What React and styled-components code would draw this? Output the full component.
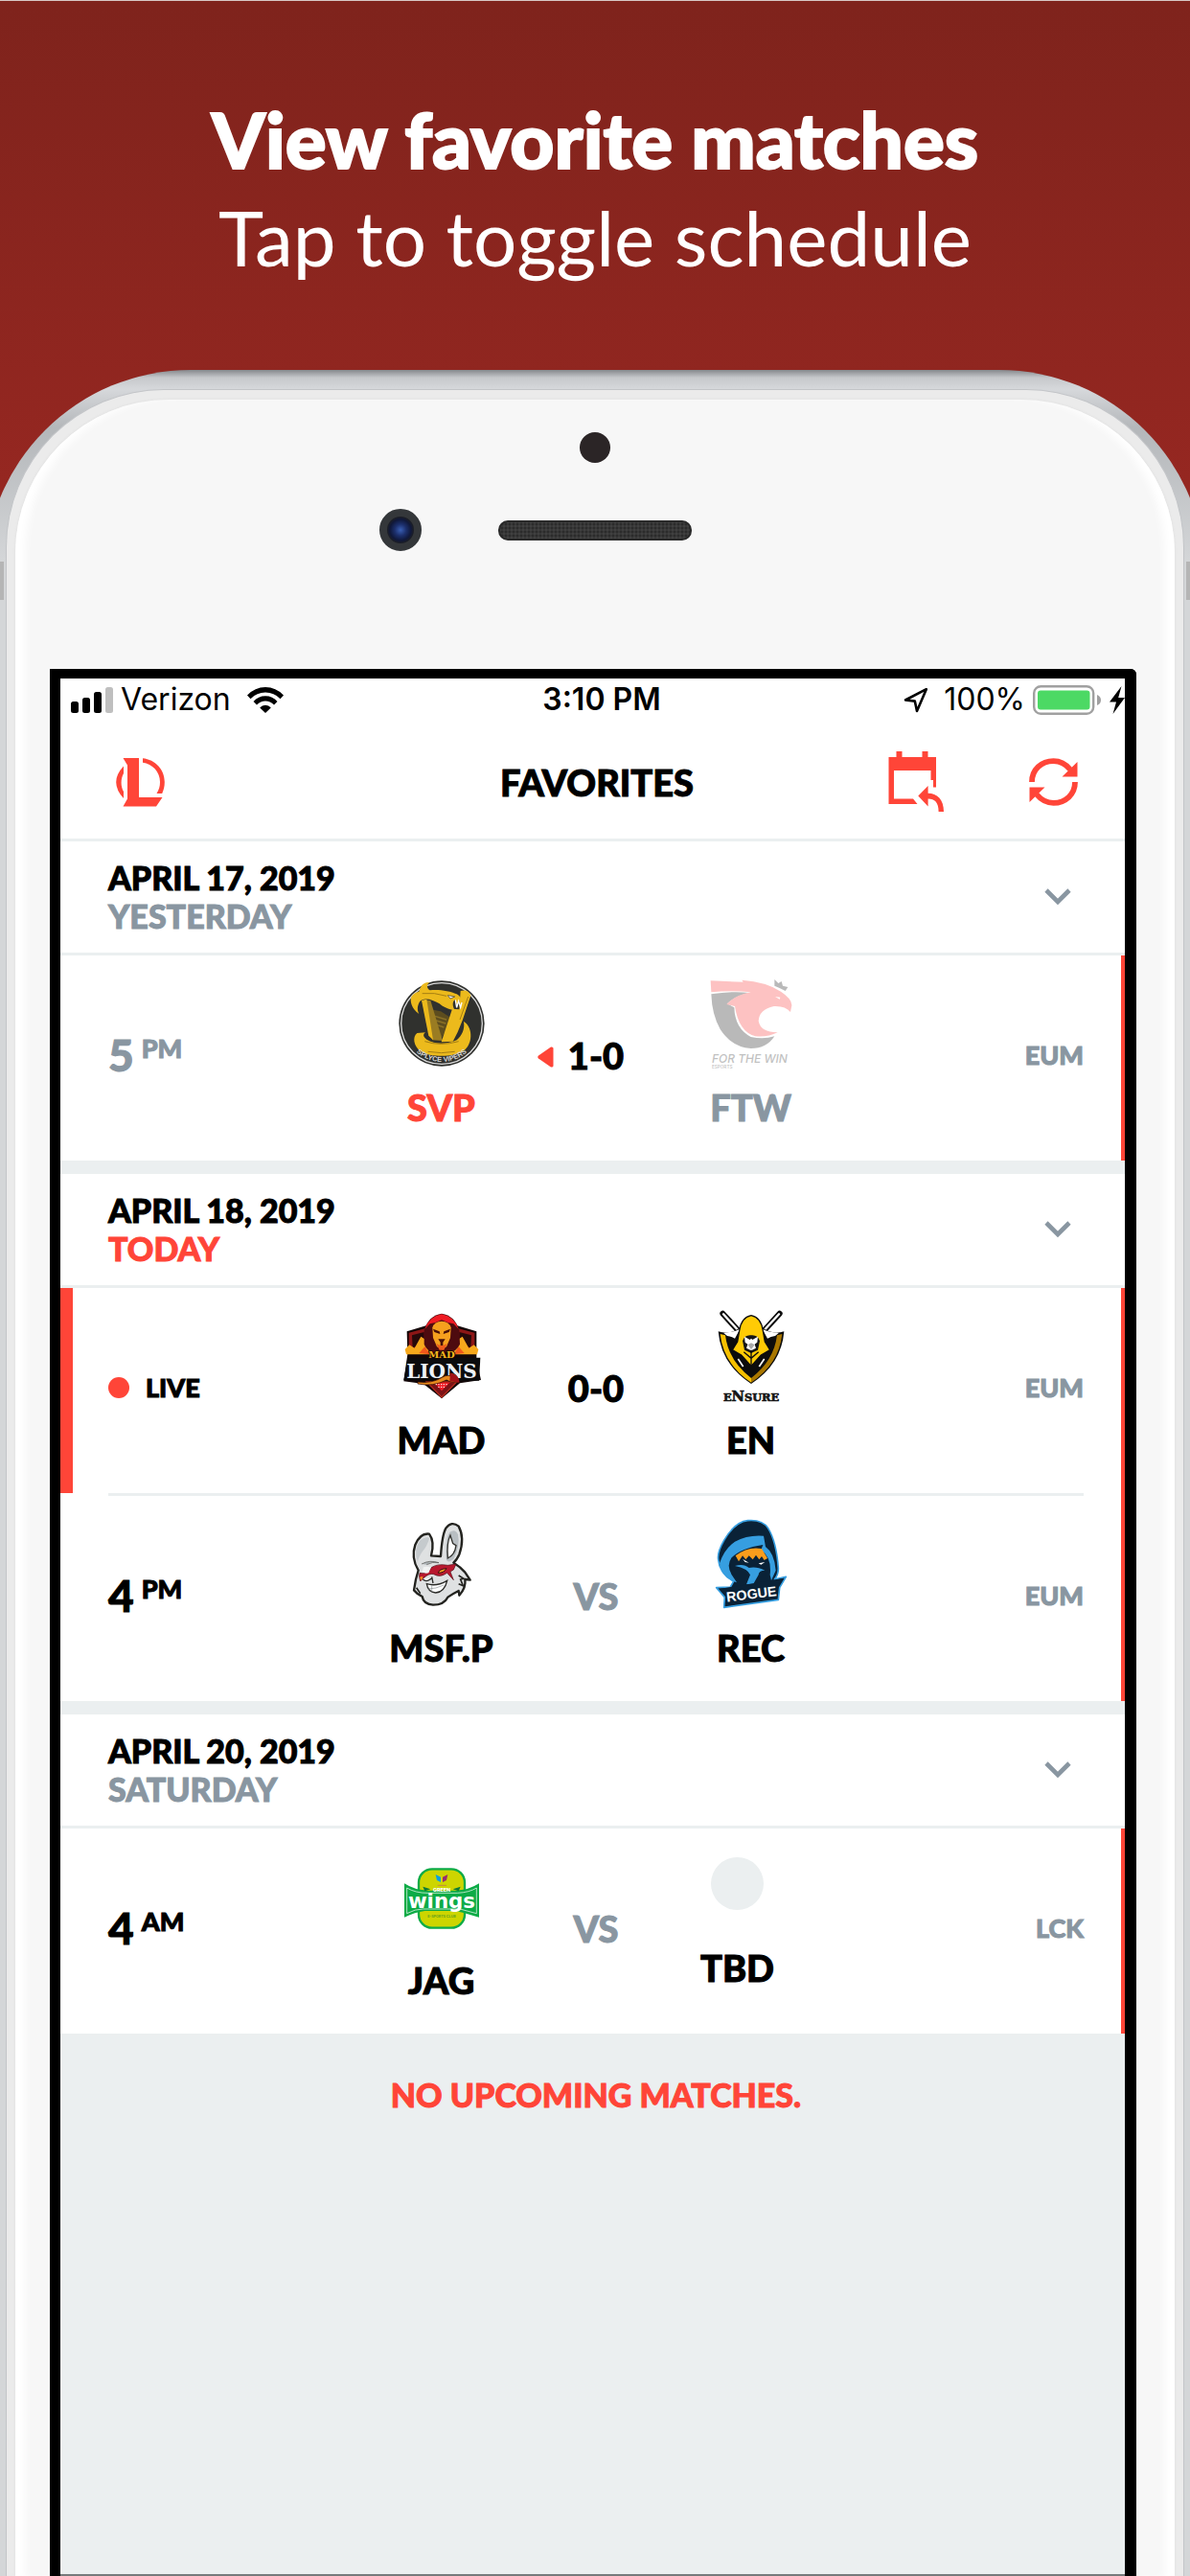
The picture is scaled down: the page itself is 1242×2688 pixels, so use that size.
import React from "react";
import styled, { createGlobalStyle, css } from "styled-components";

const c = {
  red: "#ff4538",
  grey: "#8996a1",
  mist: "#ebeff0",
  black: "#000",
};

const display = `Lato, "Open Sans", sans-serif`;
const system = `Inter, Roboto, sans-serif`;

const heavy = css`
  font-weight: 900;
  -webkit-text-stroke: 1px currentColor;
`;

const GlobalStyle = createGlobalStyle`
  *, *::before, *::after { box-sizing: border-box; }
  html, body { margin: 0; padding: 0; }
  body { font-family: ${display}; color: ${c.black}; background: #962721; }
`;

/* ---------- promo frame ---------- */

const Page = styled.main`
  min-height: 100vh;
  display: flex;
  flex-direction: column;
  overflow: hidden;
  border-top: 1px solid #d9c8c6;
  background: linear-gradient(180deg, #7f231c 0, #962721 520px);
`;

const Promo = styled.header`
  padding: 93px 24px 87px;
  color: #fff;
  text-align: center;
`;

const PromoTitle = styled.h1`
  margin: 0;
  font-size: 80px;
  line-height: 102px;
  font-weight: 900;
  -webkit-text-stroke: 2px currentColor;
`;

const PromoText = styled.p`
  margin: 0;
  font-size: 80px;
  line-height: 103px;
  font-weight: 400;
`;

const Phone = styled.div`
  position: relative;
  flex: 1;
  display: flex;
  margin: 0 -16px;
  padding: 20px 22px 0;
  border-radius: 215px 215px 0 0;
  background: linear-gradient(180deg, #85888c 0, #c6c8cb 8px, #d6d8db 20px, #b4b7ba 60px, #d4d6d8 200px, #d4d6d8 100%);
`;

const SideKey = styled.span`
  position: absolute;
  top: 200px;
  ${(p) => p.$side}: 16px;
  width: 4px;
  height: 40px;
  background: #b5b5b5;
`;

const Bezel = styled.div`
  flex: 1;
  display: flex;
  padding: 10px 9px 0;
  border: 1px solid #c3c5c8;
  border-bottom: 0;
  border-radius: 165px 165px 0 0;
  background: #ebebeb;
`;

const Face = styled.div`
  flex: 1;
  display: flex;
  flex-direction: column;
  padding: 34px 40px 0 36px;
  border-radius: 160px 160px 0 0;
  background: #f7f7f7;
  box-shadow: 0 0 3px #dcdcdc, inset 14px 0 8px -4px #fff, inset -14px 0 8px -4px #fff;
`;

const Sensor = styled.span`
  align-self: center;
  width: 32px;
  height: 32px;
  margin-left: 4px;
  border-radius: 50%;
  background: #2b2526;
`;

const Hardware = styled.div`
  display: grid;
  grid-template-columns: 1fr auto 1fr;
  align-items: center;
  margin: 48px 0 123px 4px;
`;

const Lens = styled.span`
  justify-self: end;
  width: 44px;
  height: 44px;
  margin-right: 80px;
  border: 8px solid #34373a;
  border-radius: 50%;
  background: radial-gradient(circle at 50% 50%, #3a5fb4 0, #1c2f6c 6px, #10183a 11px, #1d1f24 14px);
`;

const Speaker = styled.span`
  width: 202px;
  height: 21px;
  border: 2px solid #2a2a2a;
  border-radius: 10px;
  background: radial-gradient(circle, #2b2b2b 1px, #404040 2px) 0 0 / 4px 4px;
`;

const Screen = styled.section`
  flex: 1;
  display: flex;
  flex-direction: column;
  border: solid #000;
  border-width: 10px 12px 0 11px;
  border-radius: 0 6px 0 0;
  background: ${c.mist};
`;

/* ---------- app chrome ---------- */

const StatusBar = styled.div`
  display: grid;
  grid-template-columns: 1fr auto 1fr;
  align-items: center;
  height: 42px;
  padding: 2px 0 0 11px;
  background: #fff;
  font-family: ${system};
  font-size: 32px;
  line-height: 40px;
`;

const StatusGroup = styled.div`
  display: flex;
  align-items: center;
  justify-content: ${(p) => (p.$end ? "flex-end" : "flex-start")};
  gap: ${(p) => p.$gap}px;
`;

const Clock = styled.time`
  font-weight: 600;
  padding-left: 8px;
`;

const NavBar = styled.div`
  display: grid;
  grid-template-columns: 1fr auto 1fr;
  align-items: center;
  height: 128px;
  padding: 6px 49px 0 58px;
  border-bottom: 3px solid ${c.mist};
  background: #fff;
`;

const NavTitle = styled.h2`
  margin: 0;
  font-size: 38px;
  line-height: 44px;
  ${heavy}
`;

const NavActions = styled.div`
  display: flex;
  justify-content: flex-end;
  align-items: center;
  gap: 88px;
`;

const IconButton = styled.button`
  display: flex;
  justify-self: start;
  padding: 0;
  border: 0;
  background: none;
  color: ${(p) => p.$tone || c.red};
  cursor: pointer;
`;

/* ---------- schedule ---------- */

const Days = styled.div`
  display: flex;
  flex-direction: column;
  gap: 14px;
`;

const Day = styled.section`
  background: #fff;
`;

const DayHeader = styled.header`
  display: flex;
  align-items: center;
  justify-content: space-between;
  padding: 18px 56px 18px 50px;
  border-bottom: 3px solid ${c.mist};
  font-size: 34px;
  line-height: 40px;
  ${heavy}
`;

const DayDate = styled.h3`
  margin: 0;
  font: inherit;
`;

const DayLabel = styled.p`
  margin: 0;
  color: ${(p) => (p.$today ? c.red : c.grey)};
  -webkit-text-stroke-color: ${(p) => (p.$today ? c.red : c.grey)};
`;

const MatchList = styled.ul`
  margin: 0;
  padding: 0;
  list-style: none;
  border-right: 4px solid ${c.red};
`;

const MatchItem = styled.li`
  padding: 0 39px 0 ${(p) => (p.$live ? 37 : 50)}px;
  border-left: ${(p) => (p.$live ? `13px solid ${c.red}` : "0")};
`;

const MatchGrid = styled.div`
  display: grid;
  grid-template-columns: 1fr 160px 163px 160px 1fr;
  border-top: ${(p) => (p.$divided ? `3px solid ${c.mist}` : "0")};
`;

const Cell = styled.div`
  display: flex;
  align-items: center;
  justify-content: ${(p) => p.$align || "flex-start"};
  min-height: 214px;
  padding-bottom: 6px;
`;

const Time = styled.time`
  display: flex;
  align-items: flex-start;
  gap: 8px;
  color: ${(p) => (p.$past ? c.grey : c.black)};
  font-size: 46px;
  line-height: 46px;
  ${heavy}
`;

const Meridiem = styled.span`
  font-size: 27px;
  line-height: 32px;
`;

const Live = styled.span`
  display: flex;
  align-items: center;
  gap: 17px;
  font-size: 27px;
  line-height: 32px;
  ${heavy}

  &::before {
    content: "";
    width: 22px;
    height: 22px;
    border-radius: 50%;
    background: ${c.red};
  }
`;

const TeamBox = styled.div`
  display: flex;
  flex-direction: column;
  align-items: center;
  gap: 20px;
  width: ${(p) => (p.$open ? 132 : 160)}px;
  padding-top: ${(p) => (p.$open ? 30 : 26)}px;
`;

const TeamName = styled.span`
  color: ${(p) => p.$color};
  font-size: 38px;
  line-height: 44px;
  ${heavy}
`;

const Crest = styled.svg`
  display: block;
  width: 90px;
  height: 90px;
  overflow: visible;
  opacity: ${(p) => (p.$faded ? 0.3 : 1)};
`;

const EmptyCrest = styled.span`
  width: 55px;
  height: 55px;
  margin-bottom: 18px;
  border-radius: 50%;
  background: ${c.mist};
`;

const Score = styled.span`
  position: relative;
  color: ${(p) => (p.$pending ? c.grey : c.black)};
  font-size: 38px;
  line-height: 44px;
  ${heavy}
`;

const WinnerMark = styled.svg`
  position: absolute;
  top: 13px;
  right: calc(100% + 15px);
  width: 17px;
  height: 22px;
`;

const League = styled.span`
  color: ${c.grey};
  font-size: 27px;
  line-height: 32px;
  ${heavy}
`;

const Notice = styled.p`
  margin: 0;
  padding: 44px 0 0 7px;
  color: ${c.red};
  font-size: 34px;
  line-height: 40px;
  text-align: center;
  ${heavy}
`;

const ScreenEnd = styled.hr`
  width: 100%;
  margin: auto 0 0;
  border: 0;
  border-top: 2px solid #767b7c;
`;

/* ---------- icons ---------- */

const Signal = () => (
  <svg width="44" height="27" viewBox="0 0 44 27" aria-hidden="true">
    <rect x="0" y="15" width="8" height="12" rx="2.5" />
    <rect x="12" y="11" width="8" height="16" rx="2.5" />
    <rect x="24" y="5" width="8" height="22" rx="2.5" />
    <rect x="36" y="0" width="8" height="27" rx="2.5" fill="#bfbfbf" />
  </svg>
);

const Wifi = () => (
  <svg width="38" height="27" viewBox="0 0 38 27" aria-hidden="true">
    <path d="M0 8.5Q8 0 19 0T38 8.5L34.5 12.2Q28 5.6 19 5.600T3.500 12.2Z" />
    <path d="M6.500 15Q11.500 9.300 19 9.300T31.500 15L28 18.500Q24 14.500 19 14.500T10 18.500Z" />
    <path d="M13.200 21.500Q15.500 18.800 19 18.800T24.800 21.500L19 27Z" />
  </svg>
);

const Location = () => (
  <svg width="26" height="27" viewBox="0 0 26 27" fill="none" stroke="#000" strokeWidth="2.600" strokeLinejoin="round" aria-hidden="true">
    <path d="M23.800 2.200L2 13.500L11.800 14.600L14 25Z" />
  </svg>
);

const Battery = () => (
  <svg width="72" height="31" viewBox="0 0 72 31" aria-hidden="true">
    <rect x="1.200" y="1.200" width="62" height="28.600" rx="7" fill="#fff" stroke="#a0a0a0" strokeWidth="2.400" />
    <rect x="5" y="5.500" width="54.500" height="20" rx="3" fill="#4cd964" />
    <path d="M67 10Q71 11.500 71 15.500T67 21Z" fill="#a0a0a0" />
  </svg>
);

const Bolt = () => (
  <svg width="16" height="29" viewBox="0 0 16 29" aria-hidden="true">
    <path d="M12.500 0L0 16.500H7L3.500 29L16 12H9.200Z" />
  </svg>
);

const LolIcon = () => (
  <svg width="51" height="52" viewBox="0 0 51 52" fill="currentColor" aria-hidden="true">
    <path d="M7.500 1H24V42H48.500L42 51.500H7.500L12 43.500V8.500Z" />
    <path d="M28 1.200C41 2.500 50.800 13 50.800 26C50.800 31 49.800 34.500 48.200 38H42.500C45 34 46 30.500 46 26C46 15.500 38 7 28 5.800Z" />
    <path d="M8 9.500V17C4.800 23 4.800 30.500 8 36V43Q-7.600 26 8 9.500Z" />
  </svg>
);

const CalendarBack = () => (
  <svg width="60" height="65" viewBox="0 0 60 65" fill="currentColor" aria-hidden="true">
    <path d="M1.500 7H9.500V1H15.500V7H36.500V1H42.500V7H51V38.500H48V31H45.500V21H7V50.500H27L31.500 56H1.500Z" />
    <path d="M32.300 47.500L42.600 37V44.800C52 45 59 51 59 64H53.600C53.600 54 49.500 50.700 42.600 50.500V58.500Z" />
  </svg>
);

const Refresh = () => (
  <svg width="51" height="50" viewBox="0 0 51 50" aria-hidden="true">
    <path d="M3 25C3 12 13 3.200 25.500 3.200C32.500 3.200 38.500 6.500 43 12" fill="none" stroke="currentColor" strokeWidth="5.800" />
    <path d="M48 25C48 38 38 46.800 25.500 46.800C18.500 46.800 12.500 43.500 8 38" fill="none" stroke="currentColor" strokeWidth="5.800" />
    <path d="M50.500 4V19.500H34.500ZM.500 46V30.500H16.500Z" fill="currentColor" />
  </svg>
);

const Chevron = () => (
  <svg width="28" height="18" viewBox="0 0 28 18" fill="none" stroke="currentColor" strokeWidth="4.600" aria-hidden="true">
    <path d="M2 2L14 14L26 2" />
  </svg>
);

/* ---------- team crests ---------- */

const Vipers = () => (
  <Crest viewBox="108 99 270 270" role="img" aria-label="Splyce Vipers">
    <defs><path id="vipers-arc" d="M138 292A120 120 0 0 0 348 292" /></defs>
    <circle cx="243" cy="234" r="134" fill="#30312e" />
    <circle cx="243" cy="234" r="127" fill="none" stroke="#dcdcdc" strokeWidth="4" />
    <path d="M208 190L240 196L268 214L262 246L242 280Z" fill="#5d4d1e" />
    <path d="M212 208L258 222M216 222L256 234M220 236L250 246" stroke="#8a7127" strokeWidth="4" />
    <path d="M172 134C180 110 188 104 206 106C194 112 196 124 206 130C232 126 268 132 290 142C304 150 308 162 304 180L298 162L292 178L284 160C276 166 276 180 284 192C266 192 244 180 236 172C214 158 186 150 174 166C166 180 166 192 172 204C150 190 142 164 148 150C154 140 162 136 172 134Z" fill="#ecba1c" />
    <path d="M188 160L208 162L246 288L214 286Z" fill="#9a7c22" />
    <path d="M180 162L196 158L216 286L202 272Z" fill="#ecba1c" />
    <path d="M302 132Q326 126 334 146L308 224Q294 262 278 290L242 292L276 188L298 190Z" fill="#ecba1c" />
    <path d="M166 264C150 276 156 306 176 320C210 342 284 340 314 318C344 292 338 242 312 228C316 252 306 272 290 286C258 300 222 300 196 284C184 276 184 268 192 262Z" fill="#ecba1c" />
    <path d="M190 290Q240 306 296 290M200 322Q242 330 284 322M182 140Q220 136 258 148M326 150L300 222" fill="none" stroke="#a57e12" strokeWidth="3" />
    <path d="M262 146L284 150L270 156Z" fill="#fff" stroke="#30312e" strokeWidth="2" />
    <path d="M286 160L290 184L296 164L302 184L306 168" fill="none" stroke="#fff" strokeWidth="4" />
    <text fontFamily="Liberation Sans Narrow, Liberation Sans, sans-serif" fontWeight="700" fontSize="22" fill="#d8d8d8" textAnchor="middle">
      <textPath href="#vipers-arc" startOffset="50%">SPLYCE VIPERS</textPath>
    </text>
  </Crest>
);

const ForTheWin = () => (
  <Crest $faded viewBox="1076 99 270 270" role="img" aria-label="For The Win Esports">
    <path d="M1086 142Q1150 132 1206 138Q1160 148 1136 172L1158 184Q1160 250 1210 276Q1250 284 1284 274Q1260 312 1210 312Q1150 308 1114 252Q1088 206 1086 142Z" fill="#1c1c1c" />
    <path d="M1084 100L1186 104L1182 98Q1260 104 1304 134Q1340 158 1338 178L1334 198Q1318 178 1282 180Q1236 190 1234 226Q1240 262 1294 262Q1262 278 1224 274Q1172 260 1160 180L1134 174Q1158 146 1210 136Q1150 130 1086 136Z" fill="#fb3a37" />
    <path d="M1284 96L1296 108L1306 102L1310 116L1326 120L1318 132Q1300 122 1284 116Z" fill="#1c1c1c" />
    <path d="M1286 150L1302 152L1300 158Z" fill="#fff" />
    <text x="1088" y="357" fontFamily="Inter, sans-serif" fontStyle="italic" fontWeight="500" fontSize="36" fill="#333">FOR THE WIN</text>
    <text x="1088" y="376" fontFamily="Inter, sans-serif" fontWeight="500" fontSize="14" fill="#333">ESPORTS</text>
  </Crest>
);

const MadLions = () => (
  <Crest viewBox="108 90 270 270" role="img" aria-label="MAD Lions">
    <path d="M134 148L194 130L243 96L292 130L352 148V236L366 300L300 310L243 358L186 312L124 304L136 220Z" fill="#120708" />
    <path d="M140 152L194 138L190 186L140 218ZM346 152L292 138L296 186L346 218Z" fill="#8c1616" />
    <path d="M150 160L188 150V180L152 200ZM336 160L298 150V180L334 200Z" fill="#26090a" />
    <path d="M196 306H290L243 354Z" fill="#7c1317" stroke="#b42a1c" strokeWidth="4" />
    <path d="M220 308H268L243 334Z" fill="#f01b24" />
    <path d="M128 204L142 190L158 200L178 164L206 182V220H132ZM358 204L344 190L328 200L308 164L280 182V220H354Z" fill="#f6a81c" />
    <path d="M172 216L190 196L206 220ZM314 216L296 196L280 220Z" fill="#f0571b" />
    <path d="M188 144Q202 98 243 92Q284 98 298 144L300 188Q288 212 266 214H220Q198 212 188 188Z" fill="#4e0b0f" />
    <path d="M190 140Q206 100 243 94Q280 100 296 140L280 124L262 120L243 112L224 120L206 124Z" fill="#ee1b23" />
    <path d="M214 136Q220 116 243 116Q266 116 272 136L270 168L258 196L243 204L228 196L216 168Z" fill="#f5a01e" />
    <path d="M216 140L236 148L238 156L220 150ZM270 140L250 148L248 156L266 150ZM232 172H254L247 182V192H239V182Z" fill="#481008" />
    <path d="M226 186L238 192H248L260 186L250 206H236Z" fill="#ee5a1c" />
    <path d="M136 232L364 230L360 302L124 300Z" fill="#0b0b0d" />
    <text x="243" y="230" textAnchor="middle" fontFamily="DejaVu Serif, serif" fontWeight="700" fontSize="30" fill="#f8b81e" stroke="#1a0a05" strokeWidth="5" paintOrder="stroke">MAD</text>
    <text x="243" y="295" textAnchor="middle" fontFamily="DejaVu Serif, serif" fontWeight="700" fontSize="60" fill="#eef3f8" stroke="#0b0b0d" strokeWidth="7" paintOrder="stroke">LIONS</text>
    <path d="M168 306Q212 312 244 292Q262 280 280 292L272 278Q292 280 298 306Q274 310 258 300Q216 322 168 312Z" fill="#e88a1d" stroke="#2a0505" strokeWidth="2" />
    <path d="M270 278Q300 284 298 308L268 304Z" fill="#a11218" />
    <path d="M224 314H262M232 322H254" stroke="#fff" strokeWidth="3" strokeDasharray="4 4" />
  </Crest>
);

const Ensure = () => (
  <Crest viewBox="1076 90 270 270" role="img" aria-label="eNsure">
    <path d="M1122 92L1166 140M1300 92L1256 140" stroke="#0c0c0c" strokeWidth="18" strokeLinecap="round" />
    <path d="M1124 94L1168 142M1298 94L1254 142" stroke="#fff" strokeWidth="7" strokeLinecap="round" />
    <path d="M1108 148Q1150 160 1180 132H1242Q1272 160 1314 148Q1306 250 1211 312Q1116 250 1108 148Z" fill="#0c0c0c" />
    <path d="M1114 156L1130 160Q1140 240 1211 294V308Q1124 250 1114 156Z" fill="#f6c000" />
    <path d="M1308 156L1292 160Q1282 240 1211 294V308Q1298 250 1308 156Z" fill="#a97700" />
    <path d="M1124 152Q1160 150 1176 140L1160 170Q1150 164 1136 162ZM1298 152Q1262 150 1246 140L1262 170Q1272 164 1286 162Z" fill="#fff" />
    <path d="M1174 146Q1180 104 1211 98Q1242 104 1248 146L1254 180L1270 206L1242 222L1211 256L1180 222L1152 206L1168 180Z" fill="#ffcb05" stroke="#0c0c0c" strokeWidth="4" />
    <path d="M1184 178Q1190 158 1211 160Q1232 158 1238 178L1232 206L1211 216L1190 206Z" fill="#161616" />
    <path d="M1190 164L1207 174L1211 170L1215 174L1232 164L1230 182L1222 188L1226 200L1211 208L1196 200L1200 188L1192 182Z" fill="#fff" />
    <path d="M1200 190L1211 184L1222 190L1211 204Z" fill="#aaa" />
    <path d="M1211 206V254M1188 212L1211 232L1234 212M1172 232L1188 254M1250 232L1234 254" stroke="#0c0c0c" strokeWidth="4" fill="none" />
    <path d="M1170 234L1186 258M1252 234L1236 258" stroke="#fff" strokeWidth="5" />
    <text x="1211" y="366" textAnchor="middle" fontFamily="DejaVu Serif, serif" fontWeight="700" fill="#161616" stroke="#161616" strokeWidth="2">
      <tspan fontSize="34">E</tspan><tspan fontSize="44">N</tspan><tspan fontSize="34">SURE</tspan>
    </text>
  </Crest>
);

const Misfits = () => (
  <Crest viewBox="108 81 270 270" role="img" aria-label="Misfits Premier">
    <g stroke="#23231f" strokeWidth="7" strokeLinejoin="round">
      <path d="M170 236Q146 196 160 156Q176 118 204 122Q222 146 210 190L240 192Q244 126 256 104Q274 80 296 98Q316 134 298 186Q290 204 280 212L300 226L316 242L332 266L316 264Q320 290 298 314L296 300Q276 310 262 320Q250 344 216 344Q186 342 182 318L166 308L156 298L162 264Z" fill="#dfe1e2" />
    </g>
    <path d="M168 210Q154 170 176 142Q196 128 204 136Q198 160 182 178Q170 196 168 210Z" fill="#c5cacd" />
    <path d="M258 204Q252 140 268 116Q286 104 294 124Q302 160 280 200Q264 214 258 204Z" fill="#b8bec2" />
    <path d="M262 198Q258 150 270 126L278 152L288 158Q284 188 262 198Z" fill="#fff" stroke="#33332f" strokeWidth="4" />
    <path d="M180 216Q206 202 234 212Q214 208 196 218" fill="#aeb4b8" stroke="#50504c" strokeWidth="2" />
    <path d="M174 244Q196 250 212 226Q232 214 262 220L288 216L280 234L270 240L280 266L260 244Q238 260 218 248Q204 244 186 260L176 270Q170 256 174 244Z" fill="#b8182e" stroke="#4f0d17" strokeWidth="2" />
    <path d="M232 244Q234 232 258 230Q250 244 232 244Z" fill="#f5991e" stroke="#3a0b12" strokeWidth="3" />
    <path d="M186 226Q198 222 210 226L202 244Q190 248 182 240Z" fill="#f2f3f3" />
    <path d="M174 258L184 254L180 268Z" fill="#f5991e" />
    <path d="M184 264Q196 276 214 258M212 256L216 276M196 278Q226 288 260 268Q252 304 224 306Q200 304 196 278Z" fill="#fff" stroke="#2b2b28" strokeWidth="4" />
    <path d="M200 294Q224 294 250 282M212 282V302" fill="none" stroke="#8a8f92" strokeWidth="2" />
    <path d="M164 290L176 308M296 252L312 262L302 264L310 284L296 278" fill="none" stroke="#23231f" strokeWidth="5" />
  </Crest>
);

const Rogue = () => (
  <Crest viewBox="1076 81 270 270" role="img" aria-label="Rogue Esports Club">
    <path d="M1108 202Q1104 180 1126 142Q1160 84 1200 80Q1246 76 1264 104Q1290 146 1296 230Q1296 250 1284 264L1320 256L1300 290L1296 328L1126 352L1128 320L1102 290L1146 288L1156 270Q1112 246 1108 202Z" fill="#0a2237" stroke="#369ee0" strokeWidth="5" strokeLinejoin="round" />
    <path d="M1112 214Q1126 170 1160 146Q1200 124 1250 128L1256 162Q1284 182 1288 236L1274 268L1270 250Q1276 196 1242 172L1248 156Q1180 166 1150 196Q1132 220 1150 250L1166 274Q1116 260 1112 214Z" fill="#369ee0" />
    <path d="M1162 190Q1200 160 1244 168L1262 198L1252 204L1244 192L1236 202L1226 188L1216 202L1204 190L1194 202L1184 190L1172 208Z" fill="#f99d1c" />
    <path d="M1184 200L1204 212L1192 210ZM1234 214L1254 210L1242 218Z" fill="#fff" />
    <path d="M1160 222Q1188 214 1204 228Q1226 222 1254 236Q1234 236 1234 250L1218 278L1196 280L1208 250Q1200 230 1160 222Z" fill="#369ee0" />
    <path d="M1112 294L1314 260L1296 288L1292 324L1132 346L1132 316Z" fill="#0a2237" />
    <text x="1212" y="325" textAnchor="middle" transform="rotate(-7 1211 310)" fontFamily="Liberation Sans Narrow, Liberation Sans, sans-serif" fontWeight="700" fontSize="43" fill="#fff">ROGUE</text>
  </Crest>
);

const GreenWings = () => (
  <Crest viewBox="108 102 270 270" role="img" aria-label="Jin Air Green Wings">
    <rect x="171" y="151" width="144" height="184" rx="42" fill="#cdd500" stroke="#0cab46" strokeWidth="7" />
    <path d="M126 196Q160 218 200 218H286Q326 218 360 196V302L312 288L286 282H190Q160 286 126 302Z" fill="#0cab46" />
    <path d="M134 210Q160 226 200 226H292Q330 224 352 210V290L300 276H184Q160 276 134 290Z" fill="#0cab46" stroke="#fff" strokeWidth="2" />
    <path d="M184 206L208 214L190 220ZM302 206L278 214L296 220Z" fill="#0a7a38" />
    <path d="M224 168L240 176V192L228 186Z" fill="#0aa0e0" />
    <path d="M262 168L246 176V192L258 186Z" fill="#9a2c6e" />
    <path d="M230 202H258" stroke="#c98a3c" strokeWidth="3" />
    <text x="243" y="222" textAnchor="middle" fontFamily="Inter, sans-serif" fontWeight="800" fontSize="16" fill="#fff">GREEN</text>
    <text x="243" y="273" textAnchor="middle" fontFamily="DejaVu Sans, sans-serif" fontWeight="700" fontSize="64" fill="#fff">wings</text>
    <text x="243" y="303" textAnchor="middle" fontFamily="Inter, sans-serif" fontWeight="700" fontSize="11" fill="#6aa51e">E-SPORTS CLUB</text>
  </Crest>
);

/* ---------- data ---------- */

const schedule = [
  {
    date: "APRIL 17, 2019",
    label: "YESTERDAY",
    matches: [
      {
        hour: "5", half: "PM", past: true, score: "1-0", winner: true, league: "EUM",
        home: { name: "SVP", color: c.red, crest: Vipers },
        away: { name: "FTW", color: c.grey, crest: ForTheWin },
      },
    ],
  },
  {
    date: "APRIL 18, 2019",
    label: "TODAY",
    today: true,
    matches: [
      {
        live: true, score: "0-0", league: "EUM",
        home: { name: "MAD", crest: MadLions },
        away: { name: "EN", crest: Ensure },
      },
      {
        hour: "4", half: "PM", league: "EUM",
        home: { name: "MSF.P", crest: Misfits },
        away: { name: "REC", crest: Rogue },
      },
    ],
  },
  {
    date: "APRIL 20, 2019",
    label: "SATURDAY",
    matches: [
      {
        hour: "4", half: "AM", league: "LCK",
        home: { name: "JAG", crest: GreenWings },
        away: { name: "TBD" },
      },
    ],
  },
];

const Team = ({ team }) => {
  const Logo = team.crest;
  return (
    <TeamBox $open={!Logo}>
      {Logo ? <Logo /> : <EmptyCrest />}
      <TeamName $color={team.color || c.black}>{team.name}</TeamName>
    </TeamBox>
  );
};

const Match = ({ match, divided }) => (
  <MatchItem $live={match.live}>
    <MatchGrid $divided={divided}>
      <Cell>
        {match.live ? (
          <Live>LIVE</Live>
        ) : (
          <Time $past={match.past}>
            {match.hour}
            <Meridiem>{match.half}</Meridiem>
          </Time>
        )}
      </Cell>
      <Team team={match.home} />
      <Cell $align="center">
        <Score $pending={!match.score}>
          {match.winner && (
            <WinnerMark viewBox="0 0 17 22" aria-label="Winner">
              <path d="M1 9.500L14 .500Q16.500 0 16.500 2V20Q16.500 22 14 21.500L1 12.500Q-.500 11 1 9.500Z" fill={c.red} />
            </WinnerMark>
          )}
          {match.score || "VS"}
        </Score>
      </Cell>
      <Team team={match.away} />
      <Cell $align="flex-end">
        <League>{match.league}</League>
      </Cell>
    </MatchGrid>
  </MatchItem>
);

export default function App() {
  return (
    <>
      <GlobalStyle />
      <Page>
        <Promo>
          <PromoTitle>View favorite matches</PromoTitle>
          <PromoText>Tap to toggle schedule</PromoText>
        </Promo>
        <Phone>
          <SideKey $side="left" />
          <SideKey $side="right" />
          <Bezel>
            <Face>
              <Sensor />
              <Hardware>
                <Lens />
                <Speaker />
              </Hardware>
              <Screen>
                <StatusBar>
                  <StatusGroup $gap={8}>
                    <Signal />
                    <StatusGroup $gap={17}>
                      <span>Verizon</span>
                      <Wifi />
                    </StatusGroup>
                  </StatusGroup>
                  <Clock>3:10 PM</Clock>
                  <StatusGroup $end $gap={8}>
                    <StatusGroup $gap={16}>
                      <Location />
                      <span>100%</span>
                    </StatusGroup>
                    <Battery />
                    <Bolt />
                  </StatusGroup>
                </StatusBar>
                <NavBar>
                  <IconButton aria-label="Leagues"><LolIcon /></IconButton>
                  <NavTitle>FAVORITES</NavTitle>
                  <NavActions>
                    <IconButton aria-label="Back to today"><CalendarBack /></IconButton>
                    <IconButton aria-label="Refresh"><Refresh /></IconButton>
                  </NavActions>
                </NavBar>
                <Days>
                  {schedule.map((day) => (
                    <Day key={day.date}>
                      <DayHeader>
                        <div>
                          <DayDate>{day.date}</DayDate>
                          <DayLabel $today={day.today}>{day.label}</DayLabel>
                        </div>
                        <IconButton $tone={c.grey} aria-label={`Toggle ${day.date}`}><Chevron /></IconButton>
                      </DayHeader>
                      <MatchList>
                        {day.matches.map((m, i) => (
                          <Match key={m.home.name} match={m} divided={i > 0} />
                        ))}
                      </MatchList>
                    </Day>
                  ))}
                </Days>
                <Notice>NO UPCOMING MATCHES.</Notice>
                <ScreenEnd />
              </Screen>
            </Face>
          </Bezel>
        </Phone>
      </Page>
    </>
  );
}
